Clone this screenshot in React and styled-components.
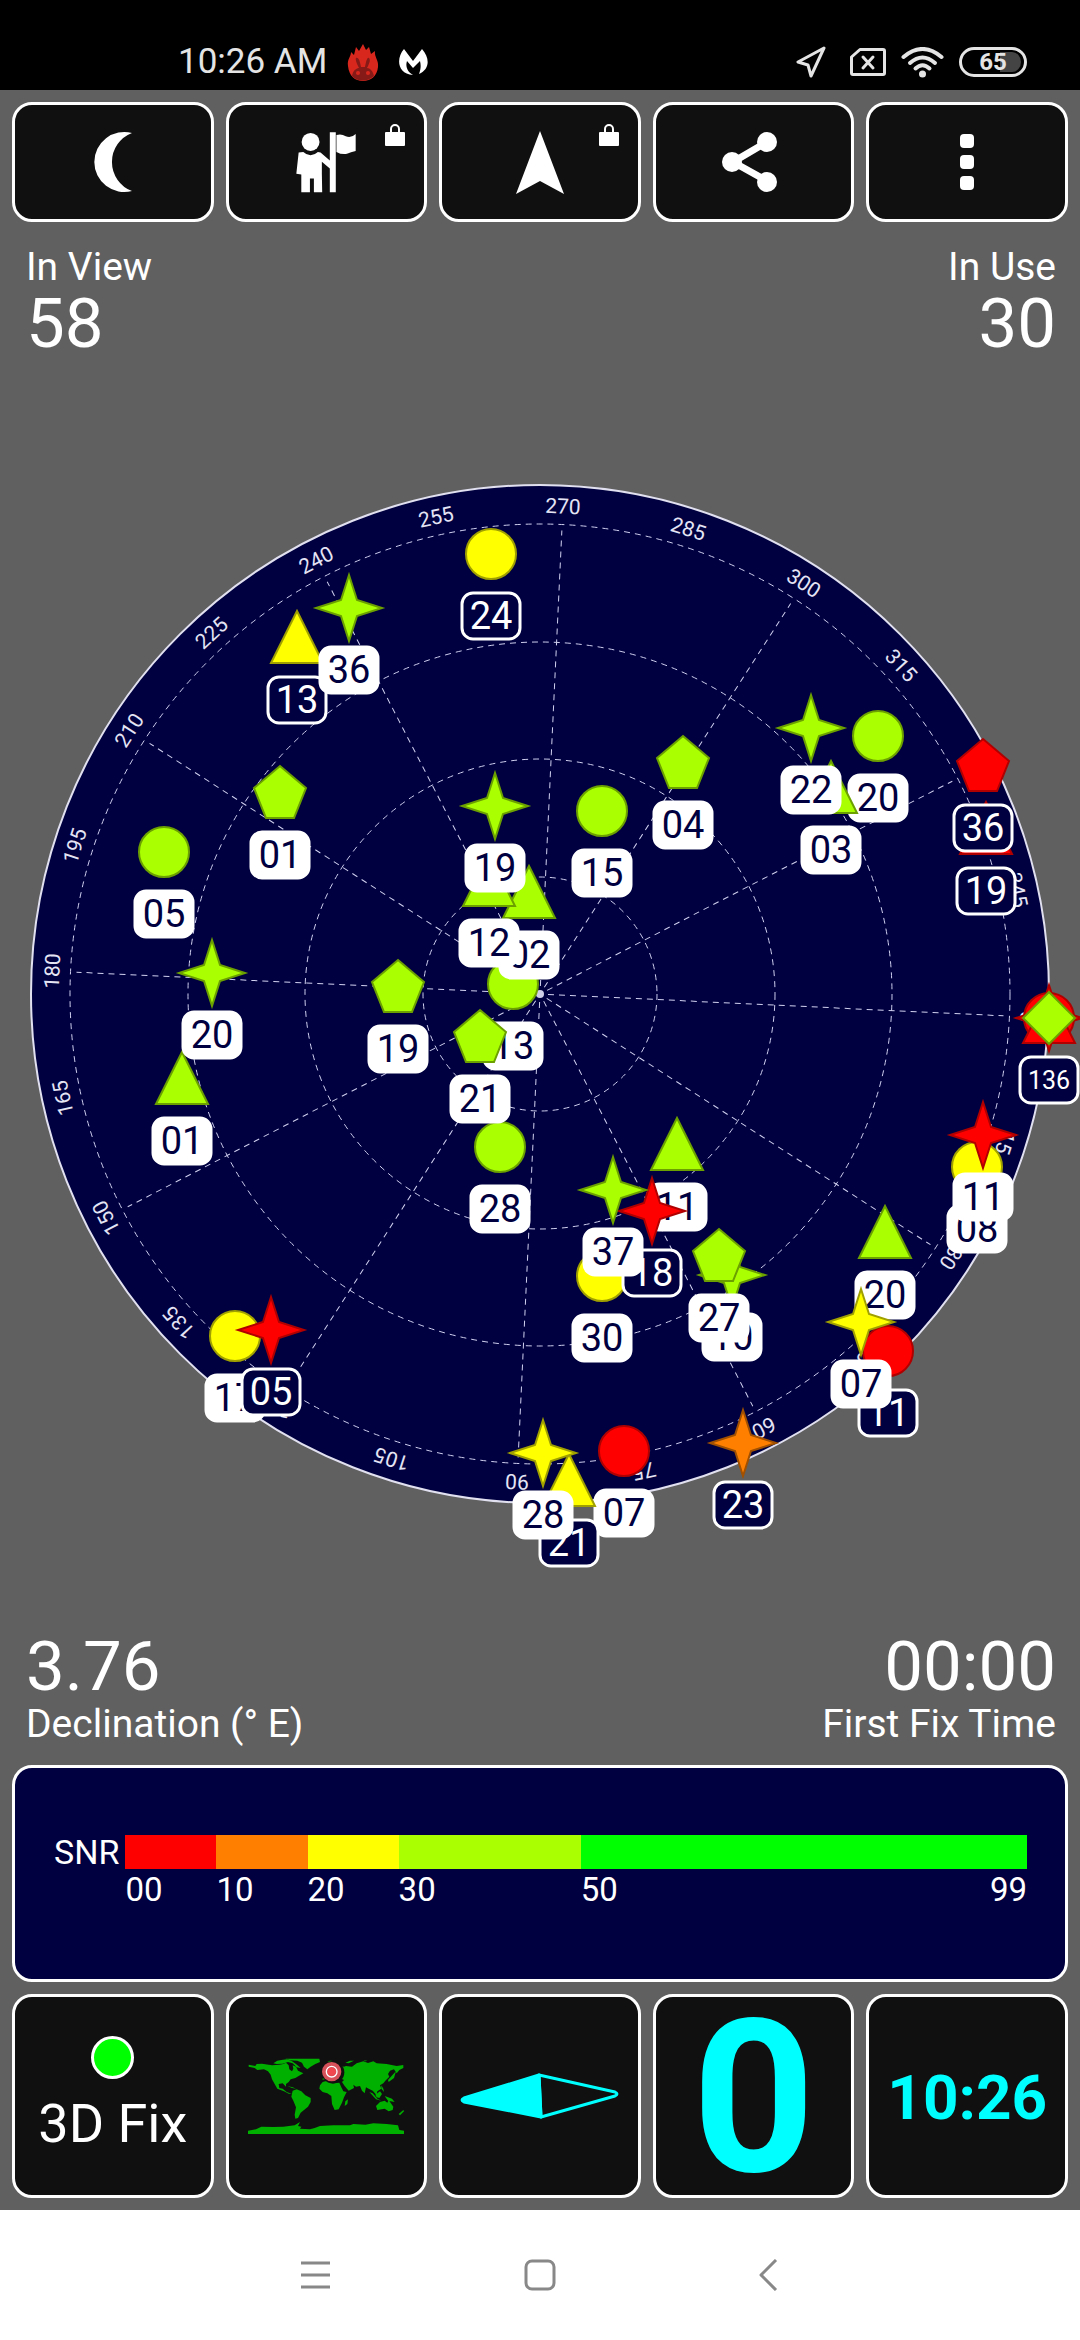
import styled, { createGlobalStyle } from "styled-components";

const GREEN = "#aaff00";
const YELLOW = "#ffff00";
const ORANGE = "#ff8000";
const RED = "#ff0000";
const NAVY = "#000040";

const edges = {
    [GREEN]: "#6ba000",
    [YELLOW]: "#a0a000",
    [ORANGE]: "#a05000",
    [RED]: "#b00000",
};

// drawn in this order, later ones cover earlier ones
const satellites = [
    { shape: "circle", id: "24", x: 491, y: 554, color: YELLOW },
    { shape: "circle", id: "05", x: 164, y: 852, color: GREEN, used: true },
    { shape: "circle", id: "13", x: 513, y: 984, color: GREEN, used: true },
    { shape: "circle", id: "28", x: 500, y: 1147, color: GREEN, used: true },
    { shape: "circle", id: "17", x: 235, y: 1336, color: YELLOW, used: true },
    { shape: "circle", id: "07", x: 624, y: 1451, color: RED, used: true },
    { shape: "circle", id: "15", x: 602, y: 811, color: GREEN, used: true },
    { shape: "circle", id: "20", x: 878, y: 736, color: GREEN, used: true },
    { shape: "circle", id: "08", x: 977, y: 1167, color: YELLOW, used: true },
    { shape: "circle", id: "11", x: 888, y: 1351, color: RED },
    { shape: "circle", id: "30", x: 602, y: 1276, color: YELLOW, used: true },
    { shape: "circle", id: "", x: 1049, y: 1018, color: RED },
    { shape: "triangle", id: "13", x: 297, y: 638, color: YELLOW },
    { shape: "triangle", id: "02", x: 529, y: 893, color: GREEN, used: true },
    { shape: "triangle", id: "12", x: 489, y: 881, color: GREEN, used: true },
    { shape: "triangle", id: "01", x: 182, y: 1079, color: GREEN, used: true },
    { shape: "triangle", id: "21", x: 569, y: 1481, color: YELLOW },
    { shape: "triangle", id: "03", x: 831, y: 788, color: GREEN, used: true },
    { shape: "triangle", id: "19", x: 986, y: 829, color: RED },
    { shape: "triangle", id: "20", x: 885, y: 1233, color: GREEN, used: true },
    { shape: "triangle", id: "11", x: 677, y: 1145, color: GREEN, used: true },
    { shape: "triangle", id: "", x: 1049, y: 1018, color: RED },
    { shape: "star", id: "36", x: 349, y: 608, color: GREEN, used: true },
    { shape: "star", id: "19", x: 495, y: 806, color: GREEN, used: true },
    { shape: "star", id: "20", x: 212, y: 973, color: GREEN, used: true },
    { shape: "star", id: "05", x: 271, y: 1330, color: RED },
    { shape: "star", id: "28", x: 543, y: 1453, color: YELLOW, used: true },
    { shape: "star", id: "23", x: 743, y: 1443, color: ORANGE },
    { shape: "star", id: "22", x: 811, y: 728, color: GREEN, used: true },
    { shape: "star", id: "11", x: 983, y: 1135, color: RED, used: true },
    { shape: "star", id: "07", x: 861, y: 1322, color: YELLOW, used: true },
    { shape: "star", id: "18", x: 652, y: 1211, color: RED },
    { shape: "star", id: "37", x: 613, y: 1190, color: GREEN, used: true },
    { shape: "star", id: "10", x: 732, y: 1275, color: GREEN, used: true },
    { shape: "star", id: "", x: 1049, y: 1018, color: RED },
    { shape: "pentagon", id: "01", x: 280, y: 793, color: GREEN, used: true },
    { shape: "pentagon", id: "19", x: 398, y: 987, color: GREEN, used: true },
    { shape: "pentagon", id: "21", x: 480, y: 1037, color: GREEN, used: true },
    { shape: "pentagon", id: "04", x: 683, y: 763, color: GREEN, used: true },
    { shape: "pentagon", id: "36", x: 983, y: 766, color: RED },
    { shape: "pentagon", id: "27", x: 719, y: 1256, color: GREEN, used: true },
    { shape: "diamond", id: "136", x: 1049, y: 1018, color: GREEN },
];

const outlines = {
    triangle: "0,-27 26,25 -26,25",
    star: "0,-33 8,-8 33,0 8,8 0,33 -8,8 -33,0 -8,-8",
    pentagon: "0,-27 26,-5 14,25 -14,25 -26,-5",
    diamond: "0,-26 26,0 0,26 -26,0",
};

const snrBands = [
    { from: "00", span: 10, color: RED },
    { from: "10", span: 10, color: ORANGE },
    { from: "20", span: 10, color: YELLOW },
    { from: "30", span: 20, color: GREEN },
    { from: "50", to: "99", span: 49, color: "#00ff00" },
];

const Satellite = ({ shape, id, x, y, color, used }) => (
    <g transform={`translate(${x} ${y})`}>
        {shape === "circle" ? (
            <circle r="25" fill={color} stroke={edges[color]} strokeWidth="2" />
        ) : (
            <polygon
                points={outlines[shape]}
                fill={color}
                stroke={edges[color]}
                strokeWidth="2"
            />
        )}
        {id ? (
            <>
                <rect
                    x="-29"
                    y="39"
                    width="58"
                    height="46"
                    rx="11"
                    fill={used ? "#ffffff" : NAVY}
                    stroke="#ffffff"
                    strokeWidth="3"
                />
                <SatelliteId
                    y={id.length > 2 ? 71 : 75}
                    $small={id.length > 2}
                    $used={used}
                >
                    {id}
                </SatelliteId>
            </>
        ) : null}
    </g>
);

const SkyPlot = () => {
    const heading = 92.7;
    const labels = Array.from({ length: 24 }, (_, i) => i * 15);
    return (
        <Plot viewBox="0 424 1080 1140" role="img" aria-label="Satellites">
            <g transform="translate(540 994)">
                <circle r="509" fill={NAVY} stroke="#e0e0f0" strokeWidth="2" />
                {[117, 235, 352, 470].map((r) => (
                    <GridCircle key={r} r={r} />
                ))}
                {labels.map((az) => (
                    <g key={az} transform={`rotate(${az + heading})`}>
                        {az % 30 === 0 ? <GridLine y1="-8" y2="-464" /> : null}
                        <Azimuth y="-481">{az}</Azimuth>
                    </g>
                ))}
                <circle r="4" fill="#d0d0e8" />
            </g>
            {satellites.map((it, i) => (
                <Satellite key={i} {...it} />
            ))}
        </Plot>
    );
};

const AntutuIcon = () => (
    <svg width="32" height="37" viewBox="0 0 32 37" aria-hidden="true">
        <path
            d="M1 22C0 15 4 13 4 8L7 11L9 3L12 7L16 0L19 6L22 3L24 10L28 7C27 13 32 16 31 23C30 32 24 37 16 37S2 32 1 22Z"
            fill="#d8281e"
        />
        <path
            d="M5 32C6 26 10 24 12 24C10 20 8 16 9 14C12 13 13 18 14 23H18C19 18 20 13 22 14C24 16 22 20 20 24C23 24 26 27 27 32C20 38 11 38 5 32Z"
            fill="#861a17"
        />
        <circle cx="11" cy="29" r="2" fill="#d8281e" />
        <circle cx="21" cy="29" r="2" fill="#d8281e" />
    </svg>
);

const MalwareIcon = () => (
    <svg width="29" height="27" viewBox="0 0 29 27" aria-hidden="true">
        <path
            d="M5 0L14 12L23 0C31 9 31 20 20 25C22 20 22 16 21 12L14 19L8 12C6 18 9 23 14 26C-2 25 -3 9 5 0Z"
            fill="#ffffff"
        />
    </svg>
);

const LocationIcon = () => (
    <svg width="39" height="32" viewBox="0 0 39 32" aria-hidden="true">
        <path
            d="M28 2L2 16L12 19L15 30Z"
            fill="none"
            stroke="#e4e4e4"
            strokeWidth="3"
            strokeLinejoin="round"
        />
    </svg>
);

const SimIcon = () => (
    <svg width="36" height="28" viewBox="0 0 36 28" aria-hidden="true">
        <g
            fill="none"
            stroke="#e4e4e4"
            strokeWidth="3"
            strokeLinejoin="round"
            strokeLinecap="round"
        >
            <path d="M10 1.5H33Q34.500 1.500 34.500 3V25Q34.500 26.500 33 26.500H3Q1.500 26.500 1.500 25V9Z" />
            <path d="M13 9L23 20M23 9L13 20" />
        </g>
    </svg>
);

const WifiIcon = () => (
    <svg width="43" height="31" viewBox="0 0 43 31" aria-hidden="true">
        <g fill="none" stroke="#e4e4e4" strokeWidth="4" strokeLinecap="round">
            <path d="M2.500 10Q21.500 -6 40.500 10" />
            <path d="M9 16Q21.500 5 34 16" />
            <path d="M14.500 21.500Q21.500 15 28.500 21.500" />
        </g>
        <circle cx="21.500" cy="27" r="3.500" fill="#e4e4e4" />
    </svg>
);

const MoonIcon = () => (
    <svg width="40" height="62" viewBox="0 0 40 62" aria-hidden="true">
        <path
            d="M39 2A30 30 0 1 0 39 60A31 31 0 0 1 39 2Z"
            fill="#ffffff"
        />
    </svg>
);

const FlagIcon = () => (
    <svg width="61" height="61" viewBox="48 64 184 184" aria-hidden="true">
        <g fill="#ffffff">
            <circle cx="92" cy="94" r="27" />
            <path d="M56 126L70 124Q92 144 114 124L122 126L150 150V65H168V246H150V174L126 154V190L127 246H102V204H90V246H64V192L49 190Z" />
            <path d="M170 73Q185 68 198 77Q214 84 228 70V121Q212 124 204 129Q188 134 170 124Z" />
        </g>
    </svg>
);

const LockIcon = () => (
    <svg width="20" height="22" viewBox="0 0 20 22" aria-hidden="true">
        <rect y="8" width="20" height="14" rx="1" fill="#ffffff" />
        <path
            d="M6 9V5A4 4 0 0 1 14 5V9"
            fill="none"
            stroke="#ffffff"
            strokeWidth="2"
        />
    </svg>
);

const ArrowIcon = () => (
    <svg width="48" height="63" viewBox="0 0 48 63" aria-hidden="true">
        <path d="M24 0L48 63L24 50L0 63Z" fill="#ffffff" />
    </svg>
);

const ShareIcon = () => (
    <svg width="66" height="62" viewBox="0 0 66 62" aria-hidden="true">
        <path
            d="M46 11L12 31L46 50"
            fill="none"
            stroke="#ffffff"
            strokeWidth="7"
        />
        <g fill="#ffffff">
            <circle cx="46" cy="11" r="10" />
            <circle cx="11" cy="31" r="10" />
            <circle cx="46" cy="51" r="10" />
        </g>
    </svg>
);

const MoreIcon = () => (
    <svg width="14" height="56" viewBox="0 0 14 56" aria-hidden="true">
        <g fill="#ffffff">
            <rect width="14" height="14" rx="4" />
            <rect y="21" width="14" height="14" rx="4" />
            <rect y="42" width="14" height="14" rx="4" />
        </g>
    </svg>
);

const WorldMap = () => (
    <svg width="156" height="76" viewBox="24 58 468 228" aria-hidden="true">
        <g fill="#00b000">
            {/* north america, arctic islands, greenland */}
            <path d="M26 78L46 82L50 76L66 75L96 80L118 78L130 76L138 72L146 80L148 92L156 98L160 90L158 80L168 84L174 96L190 104L176 112L166 118L152 122L146 130L138 136V144L128 134L116 136L118 148L128 150L140 160L156 166L146 165L132 158L112 150L104 136L96 122L92 108L84 98L72 92L52 94L44 88L26 84Z" />
            <path d="M100 74L112 66L124 64L140 62L154 66L168 76L182 88L170 86L158 74L144 70L128 75L110 76Z" />
            <path d="M136 60H238L240 70L226 76L212 84L202 92L192 84L186 72L172 66L150 65Z" />
            <path d="M142 142L158 146L168 150L156 148Z" />
            {/* south america */}
            <path d="M158 156L170 152L184 158L196 170L212 178V190L204 204L192 214L182 222L174 238L166 240L164 228L168 206L160 186L154 174Z" />
            {/* africa and madagascar */}
            <path d="M240 140L248 130L262 126L280 132L298 132L304 146L310 158L320 160L312 176L306 192L296 212L284 214L276 196L274 172L262 164L248 160L238 150Z" />
            <path d="M316 188L324 182L322 196L314 202Z" />
            {/* eurasia */}
            <path d="M246 122L258 112L290 78L312 84L318 82L336 84L350 74L370 68L384 73L400 68L410 74L440 76L470 82L490 79V88L478 94L470 104L462 92L450 96L444 106L448 114L436 126L430 134L420 140L424 150L412 158L410 170L398 156L386 150L378 146L374 164L366 156L360 142L348 144L340 138L342 148L326 156L314 142L306 130L312 124L300 118L284 124L270 122L260 124Z" />
            <path d="M262 68L272 66L284 68L272 71ZM316 72L330 66L342 66L326 74ZM370 65L382 66L376 68Z" />
            <path d="M458 108L468 98L462 118L446 130L444 124Z" />
            {/* islands and australia */}
            <path d="M388 160L398 164L412 180L424 186L408 182ZM406 168L420 158L426 166L418 178L410 176ZM424 140L430 150L432 160L424 150ZM434 172L456 180L464 190L444 186Z" />
            <path d="M408 202L420 190L434 186L442 192L446 184L460 204L458 214L446 218L434 210L412 214Z" />
            <path d="M490 214L492 218L480 230L476 226Z" />
            {/* antarctica */}
            <path d="M24 276L48 272L64 264L100 265L130 264L164 260L180 250L174 262L184 264L180 270L210 272L224 268L240 262L280 260L330 260L340 256L376 258L400 254L440 256L474 260L478 274L492 276V286H24Z" />
        </g>
        <circle cx="279" cy="101" r="34" fill="#101010" />
        <circle cx="275" cy="99" r="29" fill="#d5525b" />
        <circle cx="275" cy="99" r="12" fill="#f0484e" />
        <circle
            cx="275"
            cy="99"
            r="16"
            fill="none"
            stroke="#ffffff"
            strokeWidth="4"
        />
    </svg>
);

const CompassIcon = () => (
    <svg width="160" height="46" viewBox="0 0 160 46" aria-hidden="true">
        <g stroke="#00ffff" strokeWidth="3" strokeLinejoin="round">
            <path d="M79 2L4 25Q0 27 4 29L81 44Z" fill="#00ffff" />
            <path d="M79 2L155 19Q159 21 155 23L81 44Z" fill="none" />
        </g>
    </svg>
);

const App = () => {
    return (
        <Screen>
            <GlobalStyle />
            <StatusBar>
                <StatusGroup $gap="20px">
                    <Clock>10:26 AM</Clock>
                    <AntutuIcon />
                    <MalwareIcon />
                </StatusGroup>
                <StatusGroup $gap="15px">
                    <LocationIcon />
                    <SimIcon />
                    <WifiIcon />
                    <Battery>65</Battery>
                </StatusGroup>
            </StatusBar>

            <Content>
                <ButtonRow>
                    <ToolButton aria-label="Night mode">
                        <MoonIcon />
                    </ToolButton>
                    <ToolButton aria-label="Waypoint">
                        <FlagIcon />
                        <LockBadge>
                            <LockIcon />
                        </LockBadge>
                    </ToolButton>
                    <ToolButton aria-label="Navigate">
                        <ArrowIcon />
                        <LockBadge>
                            <LockIcon />
                        </LockBadge>
                    </ToolButton>
                    <ToolButton aria-label="Share">
                        <ShareIcon />
                    </ToolButton>
                    <ToolButton aria-label="More">
                        <MoreIcon />
                    </ToolButton>
                </ButtonRow>

                <StatRow>
                    <Stat>
                        <StatLabel>In View</StatLabel>
                        <StatValue>58</StatValue>
                    </Stat>
                    <Stat $right>
                        <StatLabel>In Use</StatLabel>
                        <StatValue>30</StatValue>
                    </Stat>
                </StatRow>

                <Sky>
                    <SkyPlot />
                </Sky>

                <StatRow>
                    <Stat>
                        <StatValue>3.76</StatValue>
                        <StatLabel>Declination (° E)</StatLabel>
                    </Stat>
                    <Stat $right>
                        <StatValue>00:00</StatValue>
                        <StatLabel>First Fix Time</StatLabel>
                    </Stat>
                </StatRow>

                <SnrPanel>
                    <SnrTitle>SNR</SnrTitle>
                    <SnrScale>
                        {snrBands.map((it) => (
                            <SnrBand key={it.from} $span={it.span}>
                                <SnrColor $color={it.color} />
                                <SnrTicks>
                                    <span>{it.from}</span>
                                    {it.to ? <span>{it.to}</span> : null}
                                </SnrTicks>
                            </SnrBand>
                        ))}
                    </SnrScale>
                </SnrPanel>

                <ButtonRow>
                    <TileButton>
                        <FixDot />
                        <FixText>3D Fix</FixText>
                    </TileButton>
                    <TileButton aria-label="Map">
                        <WorldMap />
                    </TileButton>
                    <TileButton aria-label="Compass">
                        <CompassIcon />
                    </TileButton>
                    <TileButton>
                        <Readout $size="214px">0</Readout>
                    </TileButton>
                    <TileButton>
                        <Readout $size="62px">10:26</Readout>
                    </TileButton>
                </ButtonRow>
            </Content>

            <NavBar>
                <NavButton aria-label="Menu">
                    <NavIcon viewBox="0 0 32 32">
                        <path d="M3 4H32M3 16H32M3 28H32" />
                    </NavIcon>
                </NavButton>
                <NavButton aria-label="Home">
                    <NavIcon viewBox="0 0 32 32">
                        <rect x="2" y="2" width="28" height="28" rx="6" />
                    </NavIcon>
                </NavButton>
                <NavButton aria-label="Back">
                    <NavIcon viewBox="0 0 32 32">
                        <path d="M26 1L11 16L26 31" />
                    </NavIcon>
                </NavButton>
            </NavBar>
        </Screen>
    );
};

const GlobalStyle = createGlobalStyle`
    * {
        box-sizing: border-box;
    }
    body {
        margin: 0;
        background-color: #606060;
        font-family: Roboto, "Liberation Sans", sans-serif;
    }
    button {
        font-family: inherit;
    }
`;
const Screen = styled.div`
    display: flex;
    flex-direction: column;
    min-height: 100vh;
    overflow: hidden;
    color: #ffffff;
`;
const StatusBar = styled.header`
    display: flex;
    flex-direction: row;
    justify-content: space-between;
    align-items: flex-end;
    height: 90px;
    padding: 0 53px 8px 178px;
    background-color: #000000;
`;
const StatusGroup = styled.div`
    display: flex;
    flex-direction: row;
    align-items: center;
    gap: ${({ $gap }) => $gap};
    height: 40px;
`;
const Clock = styled.div`
    font-size: 35px;
    line-height: 42px;
    color: #e4e4e4;
`;
const Battery = styled.div`
    width: 68px;
    height: 30px;
    border: 3px solid #e4e4e4;
    border-radius: 15px;
    background: linear-gradient(to right, #000000 62%, #444444 62%);
    background-clip: content-box;
    padding: 2px 3px;
    font-size: 24px;
    font-weight: 700;
    line-height: 20px;
    text-align: center;
    color: #e4e4e4;
`;
const Content = styled.main`
    display: flex;
    flex-direction: column;
    flex: 1;
    padding: 12px 0;
`;
const ButtonRow = styled.div`
    display: grid;
    grid-template-columns: repeat(5, 1fr);
    gap: 12px;
    padding: 0 12px;
`;
const ToolButton = styled.button`
    position: relative;
    display: flex;
    flex-direction: column;
    justify-content: center;
    align-items: center;
    min-width: 0;
    height: 120px;
    padding: 0;
    border: 3px solid #ffffff;
    border-radius: 20px;
    background-color: #101010;
    color: #ffffff;
`;
const TileButton = styled(ToolButton)`
    height: 204px;
`;
const LockBadge = styled.span`
    position: absolute;
    top: 19px;
    right: 19px;
    display: flex;
`;
const StatRow = styled.div`
    display: flex;
    flex-direction: row;
    justify-content: space-between;
    padding: 22px 24px 18px 26px;
`;
const Stat = styled.div`
    display: flex;
    flex-direction: column;
    text-align: ${({ $right }) => ($right ? "right" : "left")};
`;
const StatLabel = styled.div`
    font-size: 39px;
    line-height: 46px;
`;
const StatValue = styled.div`
    font-size: 69px;
    line-height: 68px;
`;
const Sky = styled.section`
    display: flex;
    flex: 1;
    align-items: center;
`;
const Plot = styled.svg`
    display: block;
    width: 100%;
    margin: -24px 0;
    overflow: visible;
`;
const GridCircle = styled.circle`
    fill: none;
    stroke: #d0d0f0;
    stroke-width: 1;
    stroke-dasharray: 6 5;
`;
const GridLine = styled.line`
    stroke: #d0d0f0;
    stroke-width: 1;
    stroke-dasharray: 6 5;
`;
const Azimuth = styled.text`
    font-size: 21px;
    text-anchor: middle;
    fill: #e4e4f4;
`;
const SatelliteId = styled.text`
    font-size: ${({ $small }) => ($small ? "25px" : "38px")};
    text-anchor: middle;
    fill: ${({ $used }) => ($used ? NAVY : "#ffffff")};
`;
const SnrPanel = styled.section`
    display: flex;
    flex-direction: row;
    justify-content: space-between;
    gap: 6px;
    height: 217px;
    margin: 0 12px 12px;
    padding: 67px 38px 0 39px;
    border: 3px solid #ffffff;
    border-radius: 20px;
    background-color: ${NAVY};
`;
const SnrTitle = styled.div`
    font-size: 34px;
    line-height: 34px;
`;
const SnrScale = styled.div`
    display: flex;
    flex-direction: row;
    flex: 1;
`;
const SnrBand = styled.div`
    flex: ${({ $span }) => $span} 1 0;
    min-width: 0;
`;
const SnrColor = styled.div`
    height: 34px;
    background-color: ${({ $color }) => $color};
`;
const SnrTicks = styled.div`
    display: flex;
    flex-direction: row;
    justify-content: space-between;
    font-size: 33px;
    line-height: 42px;
`;
const FixDot = styled.span`
    width: 43px;
    height: 43px;
    border: 3px solid #ffffff;
    border-radius: 50%;
    background-color: #00ff00;
`;
const FixText = styled.span`
    margin-top: 12px;
    font-size: 54px;
    line-height: 66px;
    white-space: nowrap;
`;
const Readout = styled.span`
    padding-top: 4px;
    font-size: ${({ $size }) => $size};
    font-weight: 700;
    line-height: 1;
    color: #00ffff;
`;
const NavBar = styled.nav`
    display: flex;
    flex-direction: row;
    justify-content: center;
    height: 130px;
    background-color: #ffffff;
`;
const NavButton = styled.button`
    display: flex;
    justify-content: center;
    align-items: center;
    width: 226px;
    padding: 0;
    border: none;
    background: none;
`;
const NavIcon = styled.svg`
    width: 32px;
    height: 32px;
    fill: none;
    stroke: #888888;
    stroke-width: 3;
    stroke-linejoin: round;
`;

export default App;
